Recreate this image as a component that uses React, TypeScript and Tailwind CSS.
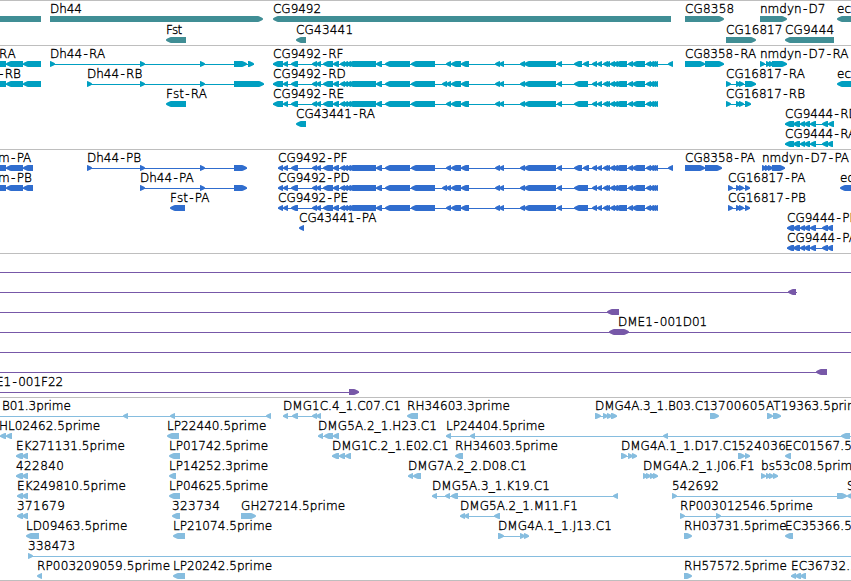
import React from 'react';

type Exon = [number, number];
// dir: l = left-pointing, r = right-pointing, b = pointed at both ends
type Feature = {
  dir?: 'l' | 'r' | 'b';
  label?: string;
  from?: number; // left edge of the label
  to?: number; // right edge of the label
  line?: Exon; // explicit intron line
  exons?: Exon[];
};
type Row = { y: number; features: Feature[] };

const f = (dir: 'l' | 'r' | 'b', label: string, from: number, to: number | undefined, exons: Exon[], line?: Exon): Feature => ({
  dir, label, from, to, exons, line,
});

const mid: Exon[] = [
  [291, 298], [312, 317], [316, 321], [323, 333], [333, 339], [340, 345], [343, 348], [346, 351], [348, 376],
  [376, 382], [385, 410], [411, 435],
];
const bend: Exon[] = [[446, 451], [451, 461], [461, 469]];
const bendD: Exon[] = [[442, 447], [446, 451], [451, 461], [461, 469]];
const centre: Exon[] = [[495, 500], [499, 504], [520, 525], [524, 556], [557, 562]];
const split: Exon[] = [[574, 582], [583, 589]];
const joined: Exon[] = [[574, 588]];
const tail: Exon[] = [
  [592, 597], [597, 602], [603, 608], [605, 610], [610, 615], [613, 618], [615, 627], [628, 633], [632, 645],
  [646, 651], [649, 654], [651, 656], [653, 658],
];
const headR: Exon[] = [[273, 283], [283, 288]];
const headP: Exon[] = [[278, 283], [283, 288]];
const longF = [...mid, ...bend, ...centre, ...split, ...tail, [668, 673] as Exon];
const longD = [...mid, ...bendD, ...centre, ...joined, ...tail];
const longE = [...mid, ...bend, ...centre, ...joined, ...tail];

const genes: Row[] = [
  { y: 16, features: [
    { exons: [[0, 41]] },
    f('r', 'Dh44', 50.5, 81, [[50, 263]]),
    f('l', 'CG9492', 273.7, 320.3, [[273, 671]]),
    f('r', 'CG8358', 685.7, 733.3, [[685, 724]]),
    f('r', 'nmdyn-D7', 760.5, 822.5, [[760, 787]]),
    f('l', 'ec', 837.7, undefined, [[837, 860]]),
  ] },
  { y: 37, features: [
    f('l', 'Fst', 166.7, 181.3, [[166, 186]]),
    f('l', 'CG43441', 296.7, 352.3, [[296, 306]]),
    f('r', 'CG16817', 726.7, 781.7, [[726, 756]]),
    f('l', 'CG9444', 785.7, 833.3, [[785, 834]]),
  ] },
];

const transcripts: Row[] = [
  { y: 61, features: [
    f('l', 'RA', -0.5, 14.7, [[-8, 6], [6, 23], [23, 41]]),
    f('r', 'Dh44-RA', 50.5, 105.7, [[50, 55], [140, 145], [200, 205], [234, 247], [248, 254]]),
    f('l', 'CG9492-RF', 273.7, 342.3, [...headR, ...longF]),
    f('r', 'CG8358-RA', 685.7, 757.7, [[685, 705], [705, 724]]),
    f('r', 'nmdyn-D7-RA', 760.5, 846.3, [[760, 765], [766, 771], [769, 774], [772, 787]]),
  ] },
  { y: 81, features: [
    f('l', '-RB', -0.5, 17, [[-8, 6], [6, 23], [23, 41]]),
    f('r', 'Dh44-RB', 87.7, 140.3, [[87, 92], [140, 145], [200, 205], [234, 264]]),
    f('l', 'CG9492-RD', 273.7, 345, [...headR, ...longD]),
    f('r', 'CG16817-RA', 726.7, 806.7, [[726, 731], [736, 741], [739, 744], [745, 756]]),
    f('l', 'ec', 837.7, undefined, [[837, 860]]),
  ] },
  { y: 101, features: [
    f('l', 'Fst-RA', 166.7, 205.7, [[166, 186]]),
    f('l', 'CG9492-RE', 273.7, 344.3, [...headR, ...longE]),
    f('r', 'CG16817-RB', 726.7, 804.7, [[726, 731], [736, 741], [739, 744], [745, 751]]),
  ] },
  { y: 121, features: [
    f('l', 'CG43441-RA', 296.7, 376.7, [[296, 306]]),
    f('l', 'CG9444-RD', 785.7, 857, [[785, 794], [793, 800], [800, 805], [804, 810], [810, 816], [822, 828], [828, 834]]),
  ] },
  { y: 141, features: [
    f('l', 'CG9444-RA', 785.7, 857.7, [[785, 794], [793, 800], [800, 805], [804, 810], [810, 816], [822, 828], [827, 833]]),
  ] },
];

const proteins: Row[] = [
  { y: 165, features: [
    f('l', 'm-PA', -1, 31, [[-8, 6], [6, 23], [23, 33]]),
    f('r', 'Dh44-PB', 87.7, 139.3, [[87, 92], [140, 145], [200, 205], [234, 247]]),
    f('l', 'CG9492-PF', 278.7, 346, [...headP, ...longF]),
    f('r', 'CG8358-PA', 685.7, 757, [[685, 705], [705, 722]]),
    f('r', 'nmdyn-D7-PA', 762.5, 847.3, [[762, 767], [765, 770], [768, 773], [772, 785]]),
  ] },
  { y: 185, features: [
    f('l', 'm-PB', -1, 28.7, [[-8, 6], [6, 23], [23, 33]]),
    f('r', 'Dh44-PA', 140.7, 194.7, [[140, 145], [200, 205], [234, 247]]),
    f('l', 'CG9492-PD', 278.7, 349.3, [...headP, ...longD]),
    f('r', 'CG16817-PA', 728.7, 807.7, [[728, 733], [736, 741], [739, 744], [745, 750]]),
    f('l', 'ec', 840.7, undefined, [[840, 860]]),
  ] },
  { y: 205, features: [
    f('l', 'Fst-PA', 170.7, 209, [[170, 185]]),
    f('l', 'CG9492-PE', 278.7, 348, [...headP, ...longE]),
    f('r', 'CG16817-PB', 728.7, 805.7, [[728, 733], [736, 741], [739, 744], [745, 750]]),
  ] },
  { y: 225, features: [
    f('l', 'CG43441-PA', 299.7, 378.7, [[299, 304]]),
    f('l', 'CG9444-PD', 787.7, 858.5, [[787, 794], [793, 800], [800, 805], [804, 810], [810, 816], [822, 828], [827, 833]]),
  ] },
  { y: 245, features: [
    f('l', 'CG9444-PA', 787.7, 858.5, [[787, 794], [793, 800], [800, 805], [804, 810], [810, 816], [822, 828], [827, 833]]),
  ] },
];

const clones: Row[] = [
  { y: 269, features: [{ line: [0, 851] }] },
  { y: 289, features: [{ dir: 'l', line: [0, 797], exons: [[788, 796]] }] },
  { y: 309, features: [{ dir: 'l', line: [0, 619], exons: [[607, 619]] }] },
  { y: 329, features: [f('b', 'DME1-001D01', 618.7, 707.3, [[609, 629]], [0, 851])] },
  { y: 349, features: [{ line: [0, 851] }] },
  { y: 369, features: [{ dir: 'l', line: [0, 827], exons: [[816, 827]] }] },
  { y: 389, features: [f('r', 'E1-001F22', -3.5, 61.7, [[349, 359]], [0, 359])] },
];

const ests: Row[] = [
  { y: 413, features: [
    f('l', 'B01.3prime', 2.7, 70, [[123, 128], [170, 175], [266, 271]], [0, 271]),
    f('l', 'DMG1C.4_1.C07.C1', 283.7, 400, [[283, 288], [292, 298], [312, 317], [316, 321]]),
    f('l', 'RH34603.3prime', 407.9, 509.3, [[407, 418]]),
    f('r', 'DMG4A.3_1.B03.C1', 595.9, 710, [[595, 601], [603, 608], [607, 612], [611, 617]]),
    f('r', '3700605', 710.9, 764.7, [[710, 719]]),
    f('r', 'AT19363.5prime', 767.3, 866, [[767, 773], [773, 781]]),
  ] },
  { y: 433, features: [
    f('l', 'HL02462.5prime', 0, 99.7, [[0, 6], [6, 12]]),
    f('l', 'LP22440.5prime', 167.9, 265.7, [[167, 179]]),
    f('l', 'DMG5A.2_1.H23.C1', 318.9, 436.3, [[318, 323], [324, 333], [333, 339]]),
    f('l', 'LP24404.5prime', 446.9, 544.3, [[446, 451], [470, 475], [663, 668], [841, 850]], [446, 851]),
  ] },
  { y: 453, features: [
    f('l', 'EK271131.5prime', 16.9, 124.3, [[16, 23], [22, 28]]),
    f('l', 'LP01742.5prime', 169.7, 267.3, [[169, 180]]),
    f('l', 'DMG1C.2_1.E02.C1', 332.9, 448, [[332, 339], [339, 345], [345, 351]]),
    f('l', 'RH34603.5prime', 455.9, 557.3, [[455, 463]]),
    f('r', 'DMG4A.1_1.D17.C1', 621.7, 738, [[621, 627], [628, 633], [632, 637]]),
    f('r', '524036', 738.5, 785, [[738, 745], [745, 750]]),
    f('l', 'EC01567.5prime', 785.9, 887, [[785, 791]]),
  ] },
  { y: 473, features: [
    f('l', '422840', 16.9, 63.3, [[16, 23], [22, 28]]),
    f('l', 'LP14252.3prime', 169.7, 267.3, [[169, 176]]),
    f('l', 'DMG7A.2_2.D08.C1', 408.9, 526.3, [[408, 413], [413, 421]]),
    f('r', 'DMG4A.2_1.J06.F1', 643.9, 754, [[643, 648], [646, 651], [650, 655], [653, 658]]),
    f('r', 'bs53c08.5prime', 761.7, 859, [[761, 766], [766, 771], [769, 774], [773, 778]]),
  ] },
  { y: 493, features: [
    f('l', 'EK249810.5prime', 17.9, 125.3, [[17, 23], [22, 28]]),
    f('l', 'LP04625.5prime', 169.7, 267.3, [[169, 180]]),
    f('l', 'DMG5A.3_1.K19.C1', 432.7, 549, [[432, 437], [445, 450], [451, 458], [613, 618]]),
    f('r', '542692', 672.9, 718.3, [[672, 677], [837, 847]]),
    f('l', 'S', 847.5, undefined, [[847, 860]]),
  ] },
  { y: 513, features: [
    f('l', '371679', 17.9, 64.3, [[17, 23], [22, 28]]),
    f('l', '323734', 172.9, 219.3, [[172, 180]]),
    f('r', 'GH27214.5prime', 241.7, 344.3, [[241, 256]]),
    f('l', 'DMG5A.2_1.M11.F1', 460.7, 577, [[460, 465], [464, 469], [494, 500]]),
    f('r', 'RP003012546.5prime', 680.9, 812.3, [[680, 685], [716, 721]], [680, 851]),
  ] },
  { y: 533, features: [
    f('l', 'LD09463.5prime', 26.7, 126.5, [[26, 39]]),
    f('l', 'LP21074.5prime', 173.7, 271.3, [[173, 185]]),
    f('r', 'DMG4A.1_1.J13.C1', 498.9, 611.3, [[498, 504], [520, 525], [524, 529]]),
    f('r', 'RH03731.5prime', 684.9, 786, [[684, 692]]),
    f('l', 'EC35366.5prime', 785.9, 887, [[785, 793]]),
  ] },
  { y: 553, features: [f('r', '338473', 28.7, 74.3, [[28, 33]], [28, 851])] },
  { y: 573, features: [
    f('l', 'RP003209059.5prime', 37.9, 169.5, [[37, 42]]),
    f('l', 'LP20242.5prime', 173.7, 271.3, [[173, 185]]),
    f('r', 'RH57572.5prime', 684.9, 786.3, [[684, 692]]),
    f('l', 'EC36732.5prime', 791.5, 892.5, [[791, 796], [795, 801], [800, 806]]),
  ] },
];

// Rounded arrow head profile: distance from the tip, half height
const profile: Exon[] = [[0, 0.6], [1.3, 1.4], [2.5, 2.1], [4, 2.7], [5, 3]];

function exonPoints([s, e]: Exon, y: number, dir?: 'l' | 'r' | 'b') {
  const m = y + 3;
  const left: Exon[] = dir === 'l' || dir === 'b' ? profile.map(([d, h]) => [s + d, h]) : [[s, 3]];
  const right: Exon[] = dir === 'r' || dir === 'b' ? profile.map(([d, h]): Exon => [e - d, h]).reverse() : [[e, 3]];
  const edge = [...left, ...right];
  const upper = edge.map(([x, h]) => `${x},${m - h}`);
  const lower = edge.map(([x, h]) => `${x},${m + h}`).reverse();
  return [...upper, ...lower].join(' ');
}

function Label({ text, x, y, width }: { text: string; x: number; y: number; width?: number }) {
  const parts = text.split(/(-)/);
  return (
    <text
      x={x}
      y={y}
      textLength={parts.length > 1 ? undefined : width}
      className="fill-black stroke-black stroke-[0.35px] text-[12px] font-extralight"
    >
      {parts.filter(Boolean).map((part, i) => (
        <tspan key={i} dx={i > 0 ? 1.3 : 0}>{part}</tspan>
      ))}
    </text>
  );
}

function Glyph({ feature, y }: { feature: Feature; y: number }) {
  const { dir, label, from = 0, to, exons = [], line } = feature;
  const span = line ?? (exons.length > 1 ? [exons[0][0], exons[exons.length - 1][1]] : undefined);
  return (
    <g>
      {span && <rect x={span[0]} y={y + 3} width={span[1] - span[0]} height={1} />}
      {exons.map((e, i) => (
        <polygon key={i} points={exonPoints(e, y, dir)} />
      ))}
      {label && (
        <Label text={label} x={Math.round(from - 1)} y={y - 3} width={to === undefined ? undefined : to - from + 1.5} />
      )}
    </g>
  );
}

function Track({ top, rows, className }: { top: number; rows: Row[]; className: string }) {
  return (
    <section className={`w-full shrink-0 overflow-hidden border-t border-[#bebebe] ${className}`}>
      <svg className="block h-full w-full" viewBox={`0 ${top} 851 200`} preserveAspectRatio="xMinYMin slice">
        {rows.map((row) => row.features.map((feature, i) => <Glyph key={`${row.y}-${i}`} feature={feature} y={row.y} />))}
      </svg>
    </section>
  );
}

export default function App() {
  return (
    <main className="flex h-[581px] w-[851px] flex-col overflow-hidden border-b border-[#bebebe] bg-white font-['DejaVu_Sans',sans-serif]">
      <Track top={1} rows={genes} className="h-[45px] fill-[#408e95]" />
      <Track top={46} rows={transcripts} className="h-[104px] fill-[#009fc1]" />
      <Track top={150} rows={proteins} className="h-[104px] fill-[#306dce]" />
      <Track top={254} rows={clones} className="h-[144px] fill-[#7758a8]" />
      <Track top={398} rows={ests} className="h-[182px] fill-[#86bddf]" />
    </main>
  );
}
